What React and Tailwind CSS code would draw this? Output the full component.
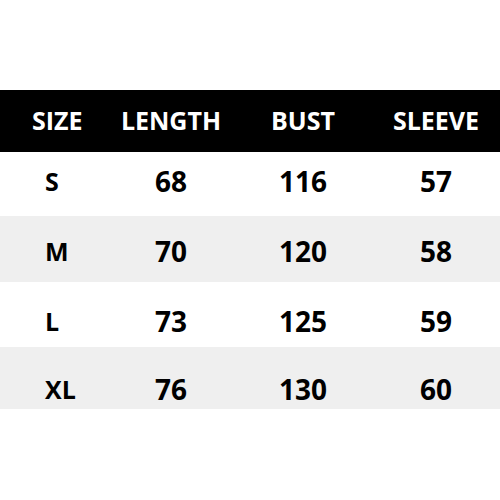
const headers = ["SIZE", "LENGTH", "BUST", "SLEEVE"];

const rows = [
  { size: "S", length: "68", bust: "116", sleeve: "57", bg: "bg-white", h: "h-[64px]", pt: "pt-[15px]" },
  { size: "M", length: "70", bust: "120", sleeve: "58", bg: "bg-[#efefef]", h: "h-[66px]", pt: "pt-[21px]" },
  { size: "L", length: "73", bust: "125", sleeve: "59", bg: "bg-white", h: "h-[65px]", pt: "pt-[25px]" },
  { size: "XL", length: "76", bust: "130", sleeve: "60", bg: "bg-[#efefef]", h: "h-[62px]", pt: "pt-[28px]" },
];

const cols = "grid grid-cols-[114px_114px_150px_116px]";

export default function App() {
  return (
    <div
      className="w-[500px] h-[500px] bg-white pt-[90px] overflow-hidden"
      style={{ fontFamily: '"Open Sans", "Liberation Sans", sans-serif' }}
    >
      <div className={`${cols} h-[62px] bg-black text-white font-bold text-[25px] items-center`}>
        {headers.map((h, i) => (
          <div key={h} className={i === 0 ? "pl-[32px]" : "text-center"}>
            {h}
          </div>
        ))}
      </div>

      {rows.map((r) => (
        <div key={r.size} className={`${cols} ${r.h} ${r.pt} ${r.bg} text-black font-bold items-start`}>
          <div className="pl-[45px] text-[25px] leading-[28px] h-[28px]">{r.size}</div>
          <div className="text-center text-[28px] leading-[28px] h-[28px]">{r.length}</div>
          <div className="text-center text-[28px] leading-[28px] h-[28px]">{r.bust}</div>
          <div className="text-center text-[28px] leading-[28px] h-[28px]">{r.sleeve}</div>
        </div>
      ))}
    </div>
  );
}
